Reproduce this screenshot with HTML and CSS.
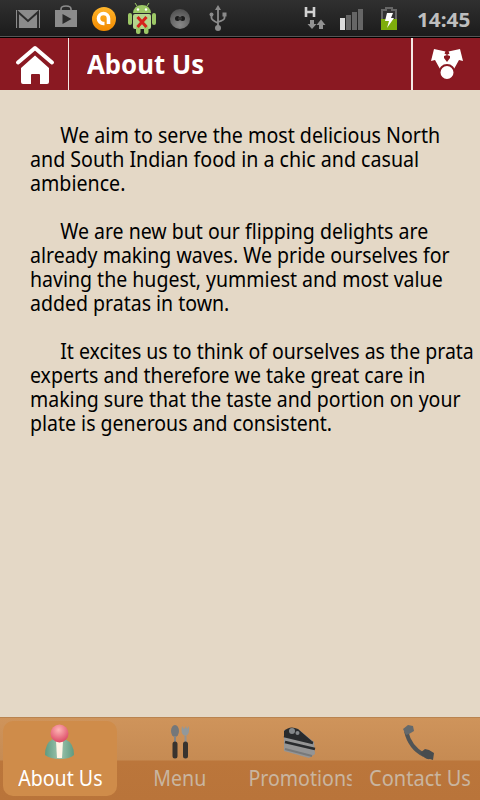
FILE: index.html
```
<!DOCTYPE html>
<html lang="en">
<head>
    <meta charset="UTF-8">
    <meta name="viewport" content="width=device-width, initial-scale=1.0">
    <title>About Us</title>
    <link rel="stylesheet" href="styles.css">
</head>
<body>
    <div class="status-bar">
        <svg class="status-icons" width="240" height="36" viewBox="0 0 240 36">
            <defs>
                <radialGradient id="ball" cx=".5" cy=".8" r=".8">
                    <stop offset="0" stop-color="#888"/>
                    <stop offset="1" stop-color="#505050"/>
                </radialGradient>
                <linearGradient id="orange" x2="0" y2="1">
                    <stop offset="0" stop-color="#ffb52b"/>
                    <stop offset="1" stop-color="#f28a00"/>
                </linearGradient>
            </defs>
            <!-- mail -->
            <rect x="16" y="10" width="24" height="18" fill="#8b8b8b"/>
            <path d="M18 28V12l10 9 10-9v16" fill="none" stroke="#2c2c2c" stroke-width="2"/>
            <!-- store -->
            <path d="M55 10h22v17H55z" fill="#8b8b8b"/>
            <path d="M61 12V9q0-3 5-3t5 3v3" fill="none" stroke="#8b8b8b" stroke-width="1.6"/>
            <path d="M62.500 14l9 5-9 5z" fill="#2a2a2a"/>
            <!-- antivirus -->
            <circle cx="104" cy="19" r="12" fill="url(#orange)"/>
            <path d="M108.500 24V18.500a5 5 0 1 0-5 5h1" fill="none" stroke="#fff" stroke-width="3.600"/>
            <!-- robot -->
            <g fill="#9cc866">
                <path d="M133 13q1-8 9-8t9 8z"/>
                <path d="M137 6l-2-3m12 3l2-3" stroke="#9cc866"/>
                <rect x="128" y="13" width="4" height="12" rx="2"/>
                <rect x="152" y="13" width="4" height="12" rx="2"/>
                <rect x="133" y="14" width="18" height="15" rx="2" fill="#b6d58c"/>
                <rect x="136" y="26" width="4.500" height="8" rx="2"/>
                <rect x="144" y="26" width="4.500" height="8" rx="2"/>
            </g>
            <circle cx="138" cy="9.500" r="1.200" fill="#fff"/>
            <circle cx="146" cy="9.500" r="1.200" fill="#fff"/>
            <path d="M137.500 17l9 10m0-10l-9 10" stroke="#d5231c" stroke-width="3"/>
            <!-- ball -->
            <circle cx="180" cy="19" r="10" fill="url(#ball)"/>
            <circle cx="177.500" cy="18.500" r="2.500" fill="#1c1c1c"/>
            <circle cx="182.500" cy="18.500" r="2.500" fill="#1c1c1c"/>
            <path d="M178 18.500h4" stroke="#333" stroke-width="2"/>
            <!-- usb -->
            <g fill="none" stroke="#8b8b8b" stroke-width="1.800">
                <path d="M218 28V8M211.500 15v3q0 2 6.500 5M224.500 15v3q0 2-6.500 4"/>
            </g>
            <path d="M218 5l3 5h-6zM222.500 12.500h4v4h-4z" fill="#8b8b8b"/>
            <circle cx="211.500" cy="14.500" r="2" fill="#8b8b8b"/>
            <circle cx="218" cy="28" r="3" fill="#8b8b8b"/>
        </svg>
        <svg class="status-icons" width="110" height="36" viewBox="300 0 110 36">
            <!-- data connection -->
            <path d="M306 7v10M314 7v10M306 12h8" stroke="#d2d2d2" stroke-width="2.600"/>
            <path d="M310 20h4v4h2.500l-4.500 5-4.500-5h2.500zM319 29h4v-4h2.500l-4.500-5.500-4.500 5.500h2.500z" fill="#929292"/>
            <!-- signal -->
            <rect x="340" y="18" width="5" height="12" fill="#dcdcdc"/>
            <path d="M346 15h5v15h-5zM352 12h5v18h-5zM358 9h5v21h-5z" fill="#666"/>
            <!-- battery -->
            <path d="M386 10V8h6v2h4v19h-14V10z" fill="#333" stroke="#666" stroke-width="2"/>
            <path d="M381 19h16v11h-16z" fill="#7eae0c"/>
            <path d="M387 13h6l-2 5h3l-7 10 2-7h-4z" fill="#fff"/>
        </svg>
        <span class="clock">14:45</span>
    </div>

    <div class="header">
        <a href="#" class="home">
            <svg width="40" height="40" viewBox="0 0 40 40">
                <path d="M3 17.500L20 3l17 14.500" fill="none" stroke="#fff" stroke-width="4" stroke-linecap="round" stroke-linejoin="round"/>
                <path d="M6 23L20 10.500 34 23v14q0 2-2 2h-7V30q0-1-1-1h-7q-1 0-1 1v9H8q-2 0-2-2z" fill="#fff"/>
            </svg>
        </a>
        <h1><span>About Us</span></h1>
        <a href="#" class="share">
            <svg width="34" height="34" viewBox="0 0 34 34">
                <path d="M4 1l11.500 2.500-1 2L17 7l2.500-1.500-1-2L30 1l3 12-4-1-5 9H10l-5-9-4 1z" fill="#fff"/>
                <path d="M14 8l3-1 3 1v2l-3 4-3-4z" fill="#8a1922"/>
                <circle cx="17" cy="24.500" r="7.500" fill="#fff" stroke="#8a1922" stroke-width="2"/>
            </svg>
        </a>
    </div>

    <div class="content">
        <p>We aim to serve the most delicious North<br>and South Indian food in a chic and casual<br>ambience.</p>
        <p>We are new but our flipping delights are<br>already making waves. We pride ourselves for<br>having the hugest, yummiest and most value<br>added pratas in town.</p>
        <p>It excites us to think of ourselves as the prata<br>experts and therefore we take great care in<br>making sure that the taste and portion on your<br>plate is generous and consistent.</p>
    </div>

    <div class="tabs">
        <a href="#" class="tab active">
            <svg width="36" height="38" viewBox="0 0 36 38">
                <defs>
                    <radialGradient id="head" cx=".45" cy=".3" r=".7">
                        <stop offset="0" stop-color="#ffb5b5"/>
                        <stop offset="1" stop-color="#dc4965"/>
                    </radialGradient>
                    <linearGradient id="body">
                        <stop offset="0" stop-color="#5f9a80"/>
                        <stop offset=".5" stop-color="#9cc4ae"/>
                        <stop offset="1" stop-color="#5f9a80"/>
                    </linearGradient>
                </defs>
                <path d="M3 31q0-12 8-16h12q9 4 9 16-4 4-14 4T3 31z" fill="url(#body)"/>
                <path d="M14 17h7l-1 17h-5z" fill="#fff4e6"/>
                <circle cx="17.500" cy="9.500" r="9" fill="url(#head)"/>
            </svg>
            <span class="label">About Us</span>
        </a>
        <a href="#" class="tab">
            <svg width="36" height="38" viewBox="0 0 36 38">
                <ellipse cx="13" cy="7" rx="4" ry="6" fill="#74777a"/>
                <path d="M13 12v9" stroke="#858585" stroke-width="2"/>
                <path d="M20 2l2 3 2-3 1 3 2-3q1 9-3.500 10Q18 11 20 2z" fill="#92989a"/>
                <path d="M23.500 12v9" stroke="#929292" stroke-width="2"/>
                <path d="M13 20v12M23.500 20v12" stroke="#39332e" stroke-width="5" stroke-linecap="round"/>
            </svg>
            <span class="label">Menu</span>
        </a>
        <a href="#" class="tab">
            <svg width="36" height="38" viewBox="0 0 36 38">
                <path d="M2 6l14-1 16 13 1 12-6 4-25-7z" fill="#959595"/>
                <path d="M2 12V7Q8 1 16 5l15 13z" fill="#292b2d"/>
                <path d="M2 12l29 7M3 18l30 7" fill="none" stroke="#292b2d" stroke-width="2.800"/>
                <path d="M3 25l27 7" stroke="#77797a" stroke-width="2"/>
                <circle cx="10" cy="7" r="3" fill="#83878a"/>
                <circle cx="15.500" cy="9" r="2" fill="#83878a"/>
            </svg>
            <span class="label clipped">Promotions</span>
        </a>
        <a href="#" class="tab">
            <svg width="36" height="38" viewBox="0 0 36 38">
                <path d="M4 7q4 17 18 24" fill="none" stroke="#505456" stroke-width="4"/>
                <path d="M1 5l5-4 5 1 1 5-5 3-3 1z" fill="#64696c"/>
                <path d="M18 29l5-4 4 1 5 3-1 7-3-1q-5 1-10-6z" fill="#484c4e"/>
            </svg>
            <span class="label wide">Contact Us</span>
        </a>
    </div>
</body>
</html>
```
FILE: styles.css
```
body {
    font-family: "Noto Sans", sans-serif;
    margin: 0;
    height: 100vh;
    background: #e4d8c6;
    display: flex;
    flex-direction: column;
    overflow: hidden;
}

a {
    text-decoration: none;
}

svg {
    display: block;
    flex-shrink: 0;
}

.status-bar {
    display: flex;
    box-sizing: border-box;
    height: 38px;
    padding-right: 10px;
    background: linear-gradient(#303030, #1b1b1b);
    border-bottom: 1px solid #000;
    box-shadow: inset 0 -1px #555;
}

.status-icons + .status-icons {
    margin-left: 60px;
}

.clock {
    margin-left: auto;
    color: #bebebe;
    font-size: 20px;
    font-weight: bold;
    line-height: 39px;
    transform: scaleX(1.04);
    transform-origin: right;
}

.header {
    display: flex;
    height: 52px;
    background: #8a1922;
}

.home {
    box-sizing: border-box;
    width: 69px;
    padding: 7px 0 0 15px;
    border-right: 1px solid #f5e8e4;
}

.header h1 {
    flex: 1;
    margin: 0;
    padding-left: 18px;
    color: #fff;
    font-size: 26px;
    line-height: 52px;
}

.header h1 span {
    display: inline-block;
    transform: scaleX(.99);
    transform-origin: left;
}

.share {
    box-sizing: border-box;
    width: 69px;
    padding: 10px 0 0 17px;
    border-left: 2px solid #f5e8e4;
}

.content {
    flex: 1;
    padding: 32px 0 0 30px;
    color: #000;
    font-size: 22px;
    line-height: 24px;
    white-space: nowrap;
}

.content p {
    margin: 0 0 24px;
    text-indent: 34px;
    transform: scaleX(.887);
    transform-origin: left;
}

.content p:first-child {
    transform: scaleX(.892);
}

.tabs {
    display: grid;
    grid-template-columns: repeat(4, 120px);
    height: 83px;
    background: linear-gradient(#cf945b 0, #c68b53 43px, #bb763b 44px, #b9743a 100%);
    box-shadow: inset 0 1px #b98450;
}

.tab {
    display: flex;
    flex-direction: column;
    align-items: center;
    margin: 4px 3px;
    padding-top: 3px;
    border-radius: 10px;
    color: #c9b5a0;
}

.tab.active {
    background: #cf8c4a;
    color: #fff;
}

.label {
    font-size: 22px;
    line-height: 30px;
    white-space: nowrap;
    transform: scaleX(.89);
}

.label.wide {
    transform: scaleX(.91);
}

.label.clipped {
    width: 116px;
    overflow: hidden;
}
```
